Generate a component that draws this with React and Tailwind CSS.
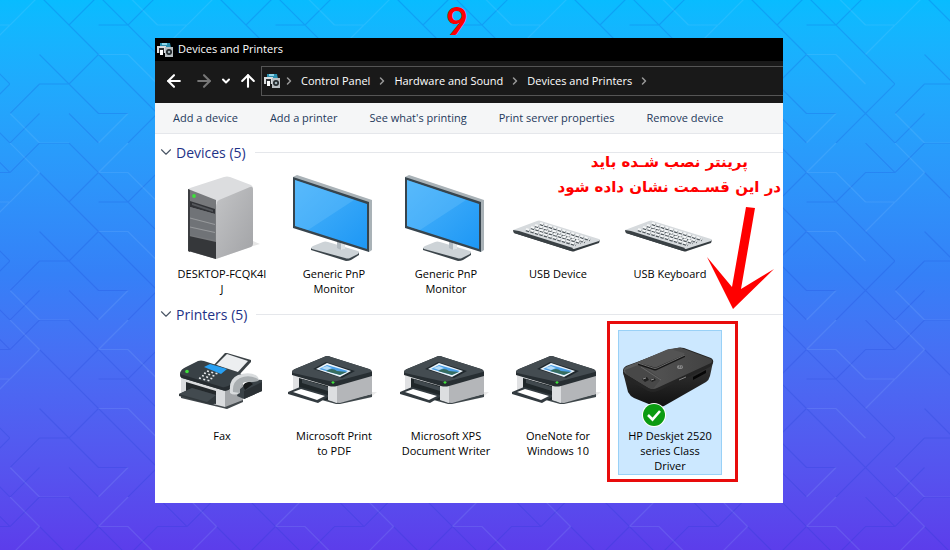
import React from 'react'
import { ArrowLeft, ArrowRight, ArrowUp, ChevronDown, ChevronRight } from 'lucide-react'

const Background = () => (
  <svg className="absolute inset-0 w-full h-full" aria-hidden="true">
    <defs>
      <pattern id="mesh" width="6" height="6" patternUnits="userSpaceOnUse" patternTransform="translate(10 143) scale(29.5)">
        <g fill="none" strokeWidth="0.04">
          <path
            stroke="#0a2fc8"
            strokeOpacity="0.17"
            d="M0 5L1 4H2L3 5H4 M0 1L1 0H2L6 4 M1 1L5 5L6 6 M2 2L3 1 M3 2H4 M1 3L3 5 M2 4L3 3 M0 5L1 4 M2 5L3 6 M0 6L1 5 M5 0L6 1 M4 2L5 1H6 M4 6L6 4"
          />
          <path
            stroke="#a8d8ff"
            strokeOpacity="0.13"
            d="M0 0L1 1L0 2 M3 1L4 0 M3 1H4L5 2 M3 3H4L5 4 M0 5L1 6H2 M3 6L4 5 M5 2H6 M5 3L6 2"
          />
        </g>
      </pattern>
    </defs>
    <rect width="100%" height="100%" fill="url(#mesh)" />
  </svg>
)

const DevicesIcon = () => (
  <svg width="16" height="16" viewBox="0 0 16 16" aria-hidden="true">
    <path d="M3 1h10l1 5H3z" fill="#2a8fb0" />
    <path d="M5 1h5v2H5z" fill="#8fd6ea" />
    <path d="M0 4h9v7H0z" fill="#d9dcde" />
    <path d="M2 6h5v5H2z" fill="#2c3033" />
    <path d="M3 8h3v5H3z" fill="#fff" />
    <path d="M8 5h8v10H8z" fill="#b9bfc2" />
    <circle cx="12" cy="10" r="3" fill="#22282b" />
    <circle cx="12" cy="10" r="1.3" fill="#9fb0b6" />
  </svg>
)

const TowerIcon = () => (
  <svg width="96" height="96" viewBox="0 0 96 96" aria-hidden="true">
    <defs>
      <linearGradient id="towerSide" x1="0" y1="0" x2="1" y2="1">
        <stop offset="0" stopColor="#c3c4c6" />
        <stop offset="1" stopColor="#a2a3a6" />
      </linearGradient>
    </defs>
    <path d="M42 89L79 76L86 74L79 71z" fill="#e6e6e6" />
    <path d="M14 20Q14 19 16 18L50 7Q53 6 56 7L77 15Q79 16 79 19L42 33z" fill="#dcdddf" />
    <path d="M42 36Q42 32 45 30L76 17Q79 16 79 20V74Q79 76 77 77L42 89z" fill="url(#towerSide)" />
    <path d="M14 19L42 30V89L14 81z" fill="#77797c" />
    <path d="M14 19L16 20V82L14 81z" fill="#3c3e41" />
    <path d="M16 31L41 39V44L16 37z" fill="#313337" />
    <path d="M18 33L39 40V42L18 35z" fill="#54575b" />
    <path d="M16 37L41 44V54L16 48z M16 49L41 55V62L16 57z M16 58L41 63V70L16 65z" fill="#707377" />
    <path d="M16 48L41 54.500M16 57L41 62.500" stroke="#a0a2a5" strokeWidth="0.8" />
    <path d="M15 66L42 72V89L15 81z" fill="#35373a" />
    <circle cx="20" cy="26" r="1.9" fill="#3ee03a" />
  </svg>
)

const MonitorIcon = () => (
  <svg width="96" height="96" viewBox="0 0 96 96" aria-hidden="true">
    <defs>
      <linearGradient id="screen" x1="0" y1="0" x2="1" y2="1">
        <stop offset="0" stopColor="#4db5fb" />
        <stop offset="1" stopColor="#1d97f5" />
      </linearGradient>
    </defs>
    <path d="M25 78V80L60 91Q63 91 65 90L73 85V82z" fill="#3b444a" />
    <path d="M27 76L37 72Q39 71 42 72L72 81Q74 82 72 84L64 88Q62 89 59 88L26 79Q24 78 27 76z" fill="#cdd3d7" />
    <path d="M51 66H59V79Q55 81 51 78z" fill="#b2bac0" />
    <path d="M55 68H59V79L55 80z" fill="#dfe4e7" />
    <path d="M7 7L11 5L86 30V80L83 82z" fill="#a9b2b7" />
    <path d="M7 7L83 32V82L7 58z" fill="#37444d" />
    <path d="M9 10L81 34V79L9 56z" fill="url(#screen)" />
    <path d="M9 10L68 30L22 60L9 56z" fill="#6cc3fd" fillOpacity="0.35" />
  </svg>
)

const KeyboardIcon = () => (
  <svg width="96" height="96" viewBox="0 0 96 96" aria-hidden="true">
    <path d="M3 60L4 63L61 81Q63 82 65 81L89 73L90 70z" fill="#343b3f" />
    <path d="M3 60L27 51Q29 50 31 51L89 69Q91 70 89 71L64 79Q62 79 60 78L3 61z" fill="#d6dadd" />
    <path d="M3 60L4 63L61 81L63 78L9 61z" fill="#3a4145" />
    <g stroke="#50585d" strokeWidth="2.6" strokeDasharray="3.4 1.3">
      <path d="M16 60L66 75M21 58L71 73M25 56L75 72M30 54L80 70" />
    </g>
    <g stroke="#f5f7f8" strokeWidth="2" strokeDasharray="3.4 1.3">
      <path d="M16 59L66 74M21 57L71 72M25 55L75 71M30 53L80 69" />
    </g>
  </svg>
)

const FaxIcon = () => (
  <svg width="96" height="96" viewBox="0 0 96 96" aria-hidden="true">
    <path d="M39 34L51 21L53 21L77 28V30L65 43z" fill="#3a4145" />
    <path d="M42 33L53 22L74 29L63 41z" fill="#eceef0" />
    <path d="M7 44L51 57V76L7 64z" fill="#dadcde" />
    <path d="M51 57L69 48V69L54 76Q52 77 51 76z" fill="#a3a6a9" />
    <path d="M7 64L51 75L69 68V70L53 77L7 66z" fill="#43494d" />
    <path d="M12 50L42 59V72L12 62z" fill="#24292c" />
    <path d="M5 62L18 56L42 63V71L38 73L5 64z" fill="#31383c" />
    <path d="M5 62L18 56L42 63L33 70z" fill="#424a4f" />
    <path d="M6 41Q7 37 12 35L24 29Q27 28 30 29L64 40Q69 42 68 47L57 56Q53 60 48 58L8 46Q6 45 6 41z" fill="#394146" />
    <path d="M6 42L48 55Q53 56 57 52L68 44V47L57 56Q53 60 48 58L8 46Q6 45 6 42z" fill="#262c30" />
    <path d="M30 35L36 32L53 37L47 42z" fill="#28a0f3" />
    <g stroke="#e7eaec" strokeWidth="1.5" strokeDasharray="2 2.4">
      <path d="M33 39L44 42M30 41L42 44.500M28 43.500L39 47M25 46L36 49" />
    </g>
    <circle cx="13" cy="39.5" r="1.8" fill="#3ee03a" />
    <path d="M65 58L78 47L88 48V59L70 67L63 64z" fill="#3b4348" />
    <path d="M70 59L88 50V59L70 67z" fill="#2b3135" />
    <path d="M56 58Q55 47 64 43Q76 39 83 44Q86 47 84 49L76 50Q68 49 66 55V61Q60 64 56 61z" fill="#d9dcde" />
    <path d="M59 60Q58 50 66 46Q75 42 84 47L84 49L76 50Q68 49 66 55V61z" fill="#a9aeb1" />
    <path d="M69 54Q70 50 76 50L79 52L71 58z" fill="#171a1c" />
  </svg>
)

const PrinterIcon = () => (
  <svg width="96" height="96" viewBox="0 0 96 96" aria-hidden="true">
    <path d="M52 72L86 60L91 60L84 66z" fill="#ebebeb" />
    <path d="M7 58L52 70L86 62V65L54 72Q52 72 50 72L7 60z" fill="#3e464a" />
    <path d="M7 41L47 52L52 70H50L7 58z" fill="#e0e1e3" />
    <path d="M47 52L86 42V62L54 71Q47 71 47 68z" fill="#b4b6b9" />
    <path d="M42 52H51V71L42 68z" fill="#dcdee0" />
    <path d="M13 46L42 54V68L36 68L13 57z" fill="#20272a" />
    <path d="M16 47L42 55V59L16 51z" fill="#40484d" />
    <path d="M2 60L14 55L42 63V65L32 71L2 62z" fill="#333b40" />
    <path d="M7 60L15 57L39 64L31 68z" fill="#fff" />
    <path d="M6 40Q6 38 9 37L38 25Q41 23 45 25L83 37Q86 38 86 40V44L51 54Q47 55 43 54L6 43z" fill="#272e32" />
    <path d="M6 40Q6 38 9 37L38 25Q41 23 45 25L83 37Q86 38 85 40L51 49Q47 50 43 49L7 41z" fill="#444c51" />
    <path d="M27 37L40 30L69 39L56 46z" fill="#20282d" />
    <path d="M30 37L41 31L65 39L54 45z" fill="#eaf4fb" />
    <path d="M33 37L41 33L62 39L54 43z" fill="#4a9fe8" />
    <path d="M40 39Q46 35 51 39L61 40L54 43z" fill="#376d60" />
    <path d="M35 36L41 34L46 36L41 38z" fill="#b5dcf8" />
    <path d="M47 49V52M45.500 50.500H48.500" stroke="#3ee03a" strokeWidth="1.2" />
  </svg>
)

const DeskjetIcon = () => (
  <svg width="96" height="96" viewBox="0 0 96 96" aria-hidden="true">
    <defs>
      <linearGradient id="deskjetTop" x1="0" y1="0" x2="1" y2="0">
        <stop offset="0" stopColor="#5b5b5b" />
        <stop offset="1" stopColor="#414141" />
      </linearGradient>
      <linearGradient id="deskjetFront" x1="0" y1="0" x2="0" y2="1">
        <stop offset="0" stopColor="#363636" />
        <stop offset="1" stopColor="#101010" />
      </linearGradient>
    </defs>
    <path d="M1 40L6 60Q8 64 12 66L34 75Q38 76 42 74L84 50Q87 48 88 44L91 30z" fill="url(#deskjetFront)" />
    <path d="M1 38Q1 36 4 34L15 30L46 18L55 16Q58 15 62 16L89 26Q92 28 91 31Q90 34 86 36L36 59Q31 61 26 59L4 47Q1 44 1 38z" fill="#252525" />
    <path d="M2 37Q3 35 6 34L48 17L55 16Q58 15 62 17L89 27Q91 29 89 31L35 56Q31 58 27 56L4 42Q1 40 2 37z" fill="url(#deskjetTop)" />
    <path d="M3 38L19 32L39 47L31 57L27 56L4 42z" fill="#484848" />
    <path d="M19 35L39 48" stroke="#747474" strokeWidth="0.7" />
    <path d="M16 31L46 18L63 22L63 25L35 38Q33 39 31 38L16 33z" fill="#171717" />
    <path d="M16 30L44 18Q46 17 48 17L62 21Q64 22 62 23L35 35Q33 36 31 35L17 31z" fill="#545454" />
    <path d="M16 31L31 36Q33 37 35 36L63 23" fill="none" stroke="#8b8b8b" strokeWidth="0.7" />
    <path d="M71 45L84 38V41L71 48z" fill="#060606" />
    <path d="M57 48L64 45" stroke="#858585" />
    <path d="M20 47L25 45L27 48L23 50z M28 48L32 46L34 48L30 50z" fill="#202020" />
    <path d="M21 47L24 46M29 48L32 47" stroke="#b0b0b0" strokeWidth="0.8" />
    <ellipse cx="58" cy="35" rx="3" ry="2" fill="#8b8b8b" />
    <path d="M57 36L58 33M59 36L60 34" stroke="#444" strokeWidth="0.7" />
    <circle cx="32" cy="83" r="12" fill="#fff" />
    <circle cx="32" cy="83" r="11" fill="#0b9b12" />
    <path d="M26 83L30.500 87.500L38 79" fill="none" stroke="#fff" strokeWidth="2.6" />
  </svg>
)

const devices = [
  { name: 'DESKTOP-FCQK4I\nJ', Icon: TowerIcon },
  { name: 'Generic PnP\nMonitor', Icon: MonitorIcon },
  { name: 'Generic PnP\nMonitor', Icon: MonitorIcon },
  { name: 'USB Device', Icon: KeyboardIcon },
  { name: 'USB Keyboard', Icon: KeyboardIcon },
]

const printers = [
  { name: 'Fax', Icon: FaxIcon },
  { name: 'Microsoft Print\nto PDF', Icon: PrinterIcon },
  { name: 'Microsoft XPS\nDocument Writer', Icon: PrinterIcon },
  { name: 'OneNote for\nWindows 10', Icon: PrinterIcon },
  { name: 'HP Deskjet 2520\nseries Class\nDriver', Icon: DeskjetIcon, selected: true },
]

const crumbs = ['Control Panel', 'Hardware and Sound', 'Devices and Printers']

const actions = ['Add a device', 'Add a printer', "See what's printing", 'Print server properties', 'Remove device']

const Group = ({ title, items }) => (
  <section>
    <h2 className="flex items-center gap-px h-[22px] pl-0.5 text-[#1e3287] text-[14px]">
      <ChevronDown size={18} strokeWidth={1.5} className="text-gray-600" />
      <span>{title}</span>
      <span className="flex-1 h-px ml-2 bg-gray-200" />
    </h2>
    <ul className="grid grid-cols-[repeat(auto-fill,104px)] gap-2 pl-[15px] pt-[5px]">
      {items.map(({ name, Icon, selected }, i) => (
        <li key={i} className="relative">
          <button
            className={
              selected
                ? 'w-full flex flex-col items-center px-1 py-px border border-[#99d1f7] bg-[#cce8ff]'
                : 'w-full flex flex-col items-center px-1 py-px border border-transparent'
            }
          >
            <Icon />
            <span className="w-full leading-[15px] whitespace-pre-line">{name}</span>
          </button>
          {selected && (
            <span className="absolute -left-[11px] -right-4 -top-[9px] -bottom-[7px] border-3 border-[#e80c0c] pointer-events-none" />
          )}
        </li>
      ))}
    </ul>
  </section>
)

const App = () => {
  return (
    <div className="relative min-h-screen pl-[155px] pr-[167px] pb-[47px] bg-linear-to-b from-[#08bcff] via-[#3580f7] to-[#5c3deb] text-[11px] font-['Open_Sans',sans-serif]">
      <Background />

      {/* Step number */}
      <div className="relative h-[38px] pr-6 text-center text-[38px] leading-[40px] font-bold text-[#ff0000] font-['Lato',sans-serif]">9</div>

      <main className="relative bg-white pb-7">
        {/* Title bar */}
        <h1 className="flex items-center gap-[5px] h-[23px] pl-0.5 bg-black text-white">
          <DevicesIcon />
          Devices and Printers
        </h1>

        {/* Navigation */}
        <div className="flex items-center h-[42px] pb-0.5 bg-[#191919] text-white">
          <div className="flex items-center gap-1.5 w-[106px] pl-[9px]">
            <button aria-label="Back" className="mr-1"><ArrowLeft size={20} strokeWidth={2.5} /></button>
            <button aria-label="Forward" className="text-[#777]"><ArrowRight size={20} strokeWidth={2.5} /></button>
            <button aria-label="Recent locations"><ChevronDown size={12} strokeWidth={4} /></button>
            <button aria-label="Up"><ArrowUp size={20} strokeWidth={2.5} /></button>
          </div>
          <nav className="flex items-center gap-1.5 flex-1 h-[30px] pl-0.5 border border-r-0 border-[#555]">
            <span className="flex items-center gap-[3px]">
              <DevicesIcon />
              <ChevronRight size={12} strokeWidth={3} className="text-[#999]" />
            </span>
            {crumbs.map((crumb) => (
              <React.Fragment key={crumb}>
                <a href="#" className="whitespace-nowrap">{crumb}</a>
                <ChevronRight size={12} strokeWidth={3} className="text-[#999]" />
              </React.Fragment>
            ))}
          </nav>
        </div>

        {/* Commands */}
        <div className="flex items-center gap-8 h-[31px] pl-[18px] bg-[#f5f6f7] border-b border-gray-200 text-[#1e395b]">
          {actions.map((action) => (
            <button key={action} className="whitespace-nowrap">{action}</button>
          ))}
        </div>

        <div className="flex flex-col gap-[5px] pt-[7px]">
          <Group title="Devices (5)" items={devices} />
          <Group title="Printers (5)" items={printers} />
        </div>

        {/* Note with arrow */}
        <div className="absolute right-0.5 top-28 flex flex-col items-end text-[#ff0000] pointer-events-none">
          <p dir="rtl" lang="fa" className="text-center text-[15px] leading-[25px] font-bold whitespace-nowrap font-['DejaVu_Sans',sans-serif]">
            پرینتر نصب شـده باید
            <br />
            در این قسـمت نشان داده شود
          </p>
          <svg width="68" height="103" viewBox="0 0 68 103" className="mr-1.5 mt-[7px]" aria-hidden="true">
            <path d="M39 0L48 1L34 82L67 62L26 102L0 50L25 80z" fill="#ff0000" />
          </svg>
        </div>
      </main>
    </div>
  )
}

export default App
